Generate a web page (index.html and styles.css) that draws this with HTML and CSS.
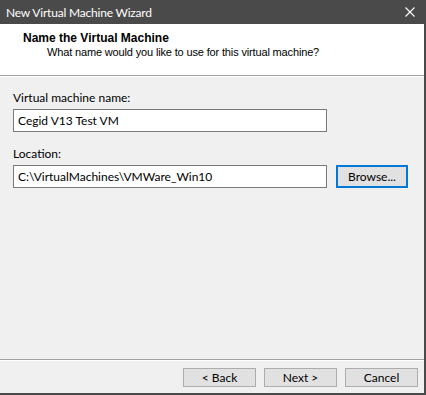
FILE: index.html
```html
<!DOCTYPE html>
<html lang="en">

<head>
    <meta charset="UTF-8">
    <meta name="viewport" content="width=device-width, initial-scale=1.0">
    <title>New Virtual Machine Wizard</title>
    <link rel="stylesheet" href="styles.css">
</head>

<body>
    <div class="window">
        <!-- Barra de titulo -->
        <div class="titlebar">
            <span class="titlebar-text">New Virtual Machine Wizard</span>
            <span class="close-btn">
                <svg width="10" height="10" viewBox="0 0 10 10">
                    <path d="M0.5 0.5 L9.5 9.5 M9.5 0.5 L0.5 9.5" stroke="#fff" stroke-width="1.1" fill="none"/>
                </svg>
            </span>
        </div>

        <!-- Cabecalho -->
        <div class="header">
            <div class="header-title">Name the Virtual Machine</div>
            <div class="header-sub">What name would you like to use for this virtual machine?</div>
        </div>

        <!-- Conteudo -->
        <div class="content">
            <div class="form-group">
                <label for="vm-name">Virtual machine name:</label>
                <input type="text" id="vm-name" class="field" value="Cegid V13 Test VM">
            </div>
            <div class="form-group">
                <label for="vm-location">Location:</label>
                <div class="row">
                    <input type="text" id="vm-location" class="field" value="C:\VirtualMachines\VMWare_Win10">
                    <button class="btn btn-focus">Browse...</button>
                </div>
            </div>
        </div>

        <!-- Rodape -->
        <div class="footer">
            <button class="btn">&lt; Back</button>
            <button class="btn">Next &gt;</button>
            <button class="btn btn-cancel">Cancel</button>
        </div>
    </div>
</body>

</html>
```

FILE: styles.css
```css
body {
    margin: 0;
    padding: 0;
    background-color: #4a4a4a;
    font-family: Lato, "Open Sans", sans-serif;
}

.window {
    width: 424px;
    height: 393px;
    display: flex;
    flex-direction: column;
    background-color: #f0f0f0;
}

.titlebar {
    height: 24px;
    background-color: #4a4a4a;
    color: white;
    display: flex;
    align-items: center;
    justify-content: space-between;
    padding-left: 6px;
}

.titlebar-text {
    font-size: 12px;
    letter-spacing: -0.2px;
}

.close-btn {
    width: 28px;
    display: flex;
    justify-content: center;
    align-items: center;
    height: 24px;
}

.header {
    height: 52px;
    background-color: white;
    border-bottom: 1px solid #a0a0a0;
    box-shadow: 0 1px 0 #ffffff;
    font-family: "Liberation Sans", Arial, sans-serif;
    font-size: 11px;
    color: black;
    box-sizing: border-box;
    padding: 8px 0 0 23px;
}

.header-title {
    font-weight: bold;
    font-size: 12px;
    line-height: 13px;
}

.header-sub {
    padding-left: 24px;
    line-height: 13px;
    margin-top: 1px;
    letter-spacing: -0.15px;
}

.content {
    flex: 1;
    padding: 13px 13px 0 13px;
    margin-top: 1px;
}

.form-group {
    margin-bottom: 14px;
}

.form-group label {
    display: block;
    font-size: 12px;
    line-height: 16px;
    margin-bottom: 3px;
}

.field {
    width: 314px;
    height: 23px;
    box-sizing: border-box;
    border: 1px solid #7a7a7a;
    background-color: white;
    padding: 0 4px;
    font-family: Lato, "Open Sans", sans-serif;
    font-size: 12px;
    color: black;
    margin: 0;
    outline: none;
}

.row {
    display: flex;
    gap: 9px;
}

.btn {
    height: 19px;
    width: 73px;
    box-sizing: border-box;
    border: 1px solid #adadad;
    background-color: #e1e1e1;
    font-family: Lato, "Open Sans", sans-serif;
    font-size: 12px;
    color: black;
    padding: 0;
    margin: 0;
}

.btn-focus {
    height: 23px;
    width: 72px;
    border: 2px solid #0078d7;
}

.footer {
    height: 34px;
    border-top: 1px solid #a0a0a0;
    box-shadow: inset 0 1px 0 #ffffff;
    display: flex;
    gap: 8px;
    padding: 8px 0 0 183px;
    box-sizing: border-box;
}
```
